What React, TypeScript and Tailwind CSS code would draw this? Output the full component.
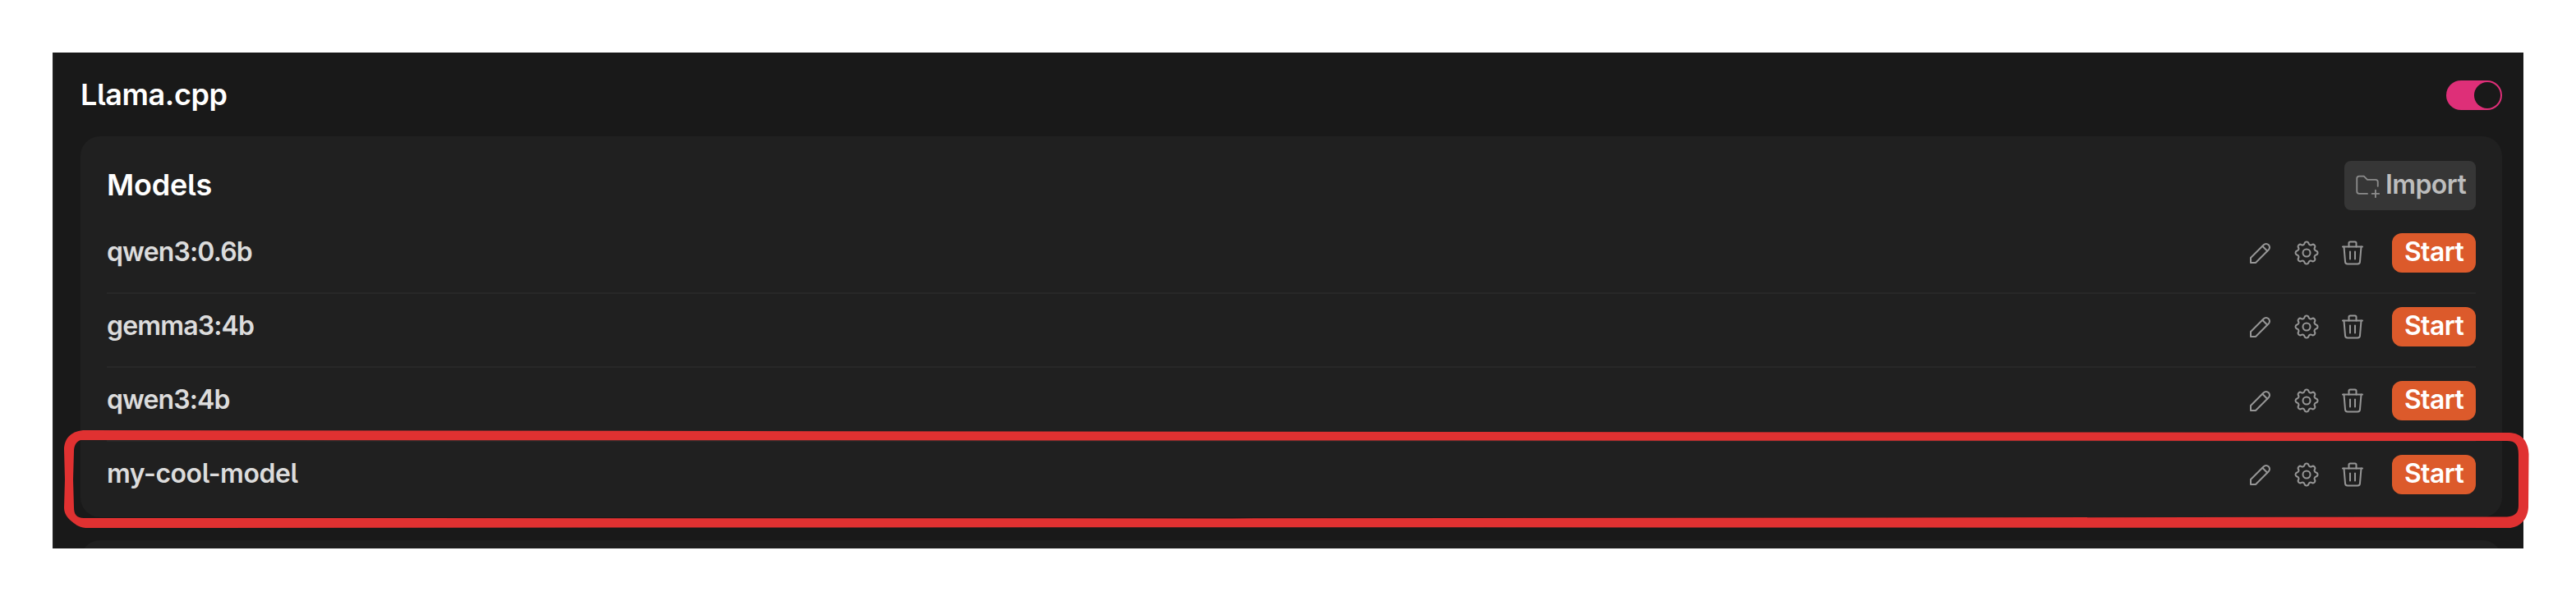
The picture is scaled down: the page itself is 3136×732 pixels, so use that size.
import { TbFolderPlus, TbPencil, TbSettings, TbTrash } from "react-icons/tb";

const models = [
  { name: "qwen3:0.6b", tracking: "tracking-[-0.85px]" },
  { name: "gemma3:4b", tracking: "tracking-[-0.85px]" },
  { name: "qwen3:4b", tracking: "tracking-[-0.9px]" },
  { name: "my-cool-model", tracking: "tracking-[-0.45px]" },
];

function ModelRow({ name, tracking }: { name: string; tracking: string }) {
  return (
    <li className="flex h-[90px] items-start justify-between border-b-2 border-[#282828] pt-4 last:border-b-0">
      <span className={`${tracking} mt-px text-[32px] leading-[44px] font-semibold text-[#dcdcdc]`}>{name}</span>
      <div className="flex h-12 items-center">
        <div className="mr-[30px] flex items-center gap-5 text-[#969696]">
          <TbPencil size={36} strokeWidth={1.35} />
          <TbSettings size={36} strokeWidth={1.35} />
          <TbTrash size={36} strokeWidth={1.35} />
        </div>
        <button className="flex h-12 w-[102px] items-center justify-center rounded-xl bg-[#dc5a2b] pb-0.5 text-[32px] font-semibold tracking-[-0.6px] text-white">
          Start
        </button>
      </div>
    </li>
  );
}

function Highlight() {
  return (
    <svg
      className="pointer-events-none absolute top-0 left-0"
      width="3136"
      height="732"
      viewBox="0 0 3136 732"
      fill="#e03131"
      fillRule="evenodd"
    >
      <path d="M104 524 L1500 525.8 L3055 527 C3070 527.5 3078 538 3078.5 553 L3078 618 C3077 634 3066 643 3054 643 L1500 642.2 L104 643 C95 642 91 638 86 634 C80 629 78 623 78 618 L79 584 L78 548 C78 533 88 524 104 524 Z M98 536 C92 538 90 544 90 550 L89 584 L90 618 C90 626 93 631 102 631 L1500 631.4 L3052 629.5 C3062 629 3066 624 3066 616 L3066 554 C3066 541 3062 537 3052 537 L1500 536.5 Z" />
    </svg>
  );
}

export default function App() {
  return (
    <div className="relative h-[732px] w-[3136px] overflow-hidden bg-white p-16 font-[Inter,sans-serif] [font-feature-settings:'cv05']">
      <main className="h-[604px] overflow-hidden border-l-2 border-[#202020] bg-[#191919] pr-[26px] pl-8">
        <header className="flex h-[102px] items-start justify-between pt-[34px]">
          <h1 className="-mt-[5px] text-[36px] leading-[44px] font-semibold tracking-[-0.4px] text-white">Llama.cpp</h1>
          <div className="flex h-9 w-[68px] items-center justify-end rounded-full bg-[#de2f78] p-0.5">
            <div className="size-8 rounded-full bg-[#191919]" />
          </div>
        </header>
        <section className="h-[464px] rounded-3xl bg-[#202020] px-8 pt-[30px]">
          <div className="flex h-[72px] items-start justify-between">
            <h2 className="mt-[7px] text-[36px] leading-[44px] font-semibold tracking-[-0.2px] text-white">Models</h2>
            <button className="flex h-[60px] w-[160px] items-center gap-[5px] rounded-lg bg-[#363636] pl-[11px] text-[32px] font-semibold tracking-[-0.6px] text-[#bdbdbd]">
              <TbFolderPlus size={34} strokeWidth={1.3} className="text-[#8c8c8c]" />
              <span className="pb-0.5">Import</span>
            </button>
          </div>
          <ul>
            {models.map((m) => (
              <ModelRow key={m.name} name={m.name} tracking={m.tracking} />
            ))}
          </ul>
        </section>
        <section className="mt-7 h-24 rounded-3xl bg-[#202020]" />
      </main>
      <Highlight />
    </div>
  );
}
